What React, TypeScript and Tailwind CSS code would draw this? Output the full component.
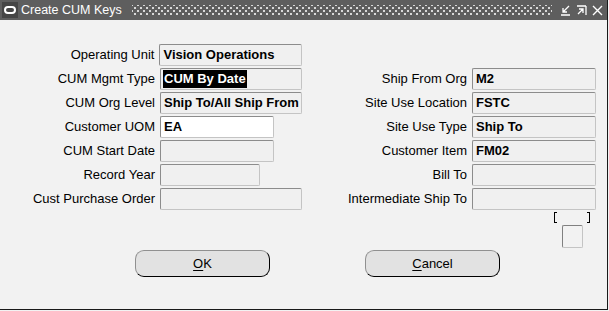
import React from "react";

const fieldCls =
  "h-[22px] flex items-center pl-[2px] border border-t-[#8c8c8c] border-l-[#8c8c8c] border-b-[#c4c4c4] border-r-[#c4c4c4] rounded-[2px] text-[13px] font-bold text-black overflow-hidden whitespace-nowrap";

function Field({
  value,
  width,
  white,
  selected,
}: {
  value?: string;
  width: string;
  white?: boolean;
  selected?: boolean;
}) {
  return (
    <div className={`${fieldCls} ${width} ${white ? "bg-white" : "bg-[#f0f0f0]"}`}>
      {value && (
        <span className={selected ? "bg-black text-white px-[1px] leading-[18px]" : "px-[1px]"}>
          {value}
        </span>
      )}
    </div>
  );
}

function Label({ text, width }: { text: string; width: string }) {
  return (
    <div className={`${width} text-right pr-[5px] text-[13px] text-black whitespace-nowrap`}>
      {text}
    </div>
  );
}

type Row = {
  left?: { label: string; value?: string; w: string; white?: boolean; selected?: boolean };
  right?: { label: string; value?: string };
};

const rows: Row[] = [
  { left: { label: "Operating Unit", value: "Vision Operations", w: "w-[143px]" } },
  {
    left: { label: "CUM Mgmt Type", value: "CUM By Date", w: "w-[142px]", selected: true },
    right: { label: "Ship From Org", value: "M2" },
  },
  {
    left: { label: "CUM Org Level", value: "Ship To/All Ship From", w: "w-[142px]" },
    right: { label: "Site Use Location", value: "FSTC" },
  },
  {
    left: { label: "Customer UOM", value: "EA", w: "w-[114px]", white: true },
    right: { label: "Site Use Type", value: "Ship To" },
  },
  {
    left: { label: "CUM Start Date", w: "w-[114px]" },
    right: { label: "Customer Item", value: "FM02" },
  },
  { left: { label: "Record Year", w: "w-[100px]" }, right: { label: "Bill To" } },
  {
    left: { label: "Cust Purchase Order", w: "w-[142px]" },
    right: { label: "Intermediate Ship To" },
  },
];

function Btn({ first, rest }: { first: string; rest: string }) {
  return (
    <button className="w-[135px] h-[27px] rounded-[9px] bg-[#e2e2e2] border border-t-[#909090] border-l-[#909090] border-b-black border-r-black text-[13px] text-black flex items-center justify-center">
      <span className="underline underline-offset-2">{first}</span>
      {rest}
    </button>
  );
}

export default function App() {
  return (
    <div className="w-[609px] h-[311px] bg-[#f2f2f2] overflow-hidden" style={{ fontFamily: '"Liberation Sans", Arial, sans-serif' }}>
      <div className="w-[608px] h-[310px] border-r border-b border-[#1a1a1a] flex flex-col">
        {/* title bar */}
        <div className="h-[20px] bg-[#5e5e5e] flex items-center pl-[2px] pr-[4px] shrink-0">
          <div className="w-[16px] h-[16px] shrink-0 bg-[#454545] flex items-center justify-center">
            <div className="w-[12px] h-[8px] rounded-full border-2 border-white" />
          </div>
          <span className="ml-[3px] text-white text-[12.5px] leading-none whitespace-nowrap shrink-0">Create CUM Keys</span>
          <div className="ml-[10px] flex-1 h-[10px] bg-[radial-gradient(circle,#d8d8d8_0.9px,transparent_1.1px),radial-gradient(circle,#d8d8d8_0.9px,transparent_1.1px)] bg-[length:6px_6px] bg-[position:0_0,3px_3px]" />
          <div className="ml-[8px] flex items-center gap-[5px] shrink-0">
            <svg width="11" height="11" viewBox="0 0 11 11" stroke="white" strokeWidth="1.3" fill="none">
              <path d="M9 1 L3 7 M3 3 V7 H7 M1 10 H10" />
            </svg>
            <svg width="11" height="11" viewBox="0 0 11 11" stroke="white" strokeWidth="1.3" fill="none">
              <path d="M1 1 H10 M10 1 V10 M2 9 L7 4 M3 4 H7 V8" />
            </svg>
            <svg width="11" height="11" viewBox="0 0 11 11" stroke="white" strokeWidth="1.4" fill="none">
              <path d="M1 1 L10 10 M10 1 L1 10" />
            </svg>
          </div>
        </div>

        {/* form */}
        <div className="pt-[24px] flex flex-col gap-[2px]">
          {rows.map((r, i) => (
            <div key={i} className="flex items-center h-[22px]">
              <div className="w-[302px] flex items-center">
                {r.left && (
                  <>
                    <Label text={r.left.label} width="w-[160px]" />
                    <Field value={r.left.value} width={r.left.w} white={r.left.white} selected={r.left.selected} />
                  </>
                )}
              </div>
              {r.right && (
                <div className="flex items-center">
                  <Label text={r.right.label} width="w-[170px]" />
                  <Field value={r.right.value} width="w-[124px]" />
                </div>
              )}
            </div>
          ))}
        </div>

        {/* brackets + checkbox */}
        <div className="flex pl-[554px] mt-[2px] h-[11px]">
          <div className="w-[3px] h-[11px] border-l border-t border-b border-black" />
          <div className="w-[30px]" />
          <div className="w-[3px] h-[11px] border-r border-t border-b border-black" />
        </div>
        <div className="pl-[562px] mt-[2px]">
          <div className="w-[21px] h-[23px] rounded-[2px] border border-t-[#808080] border-l-[#808080] border-b-[#c4c4c4] border-r-[#c4c4c4] bg-[#f2f2f2]" />
        </div>

        {/* buttons */}
        <div className="flex mt-[2px] pl-[135px] gap-[95px]">
          <Btn first="O" rest="K" />
          <Btn first="C" rest="ancel" />
        </div>
      </div>
    </div>
  );
}
